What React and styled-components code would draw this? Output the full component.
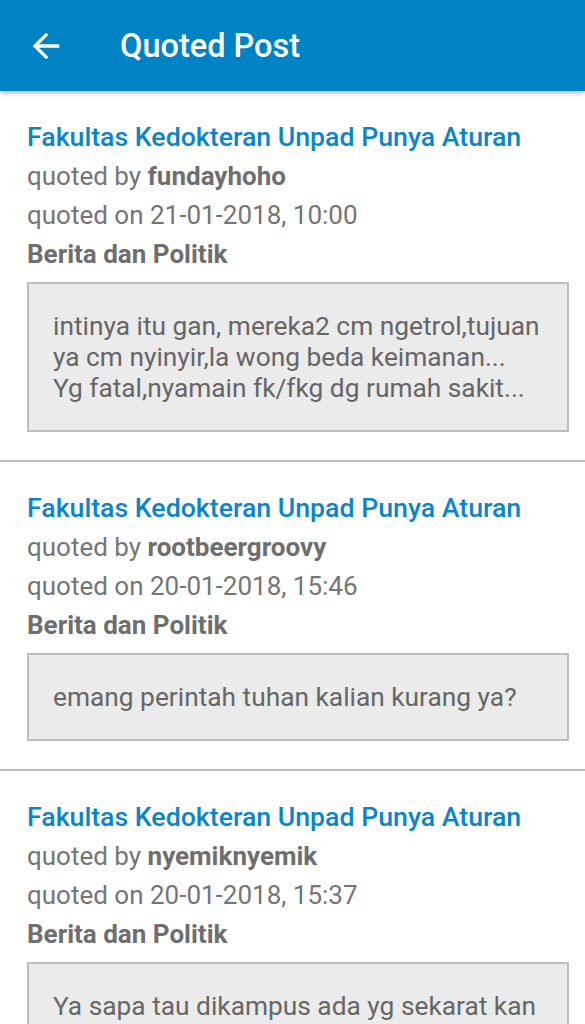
import React from "react";
import styled, { createGlobalStyle } from "styled-components";

const posts = [
  {
    user: "fundayhoho",
    date: "21-01-2018, 10:00",
    text: "intinya itu gan, mereka2 cm ngetrol,tujuan ya cm nyinyir,la wong beda keimanan...\nYg fatal,nyamain fk/fkg dg rumah sakit...",
  },
  {
    user: "rootbeergroovy",
    date: "20-01-2018, 15:46",
    text: "emang perintah tuhan kalian kurang ya?",
  },
  {
    user: "nyemiknyemik",
    date: "20-01-2018, 15:37",
    text: "Ya sapa tau dikampus ada yg sekarat kan bisa langsung ditolong gan...",
  },
];

function App() {
  return (
    <>
      <Global />
      <Page>
        <Header>
          <BackButton aria-label="back">
            <svg width="40" height="40" viewBox="0 0 24 24" fill="#fff">
              <path d="M20 11H7.83l5.59-5.59L12 4l-8 8 8 8 1.41-1.41L7.83 13H20v-2z" />
            </svg>
          </BackButton>
          <Title>Quoted Post</Title>
        </Header>
        <List>
          {posts.map((p, i) => (
            <Item key={i}>
              <ThreadTitle>Fakultas Kedokteran Unpad Punya Aturan</ThreadTitle>
              <Meta>
                quoted by <b>{p.user}</b>
              </Meta>
              <Meta>quoted on {p.date}</Meta>
              <Meta>
                <b>Berita dan Politik</b>
              </Meta>
              <Quote>{p.text}</Quote>
            </Item>
          ))}
        </List>
      </Page>
    </>
  );
}

const Global = createGlobalStyle`
  body {
    margin: 0;
    background: #ffffff;
    font-family: Roboto, "Noto Sans", sans-serif;
  }
`;

const Page = styled.div`
  width: 585px;
  height: 1024px;
  overflow: hidden;
`;

const Header = styled.header`
  height: 91px;
  background-color: #0083c5;
  display: flex;
  align-items: center;
  box-shadow: 0 2px 5px rgba(0, 0, 0, 0.3);
  position: relative;
  z-index: 1;
`;

const BackButton = styled.span`
  display: flex;
  margin-left: 26px;
  margin-top: 1px;
`;

const Title = styled.h1`
  margin: 0 0 0 54px;
  color: #ffffff;
  font-size: 32.5px;
  font-weight: 500;
`;

const List = styled.div``;

const Item = styled.div`
  padding: 27px 16px 28px 27px;
  border-bottom: 2px solid #bdbdbd;
`;

const ThreadTitle = styled.div`
  color: #0a85c8;
  font-size: 26.7px;
  font-weight: 500;
  line-height: 39px;
`;

const Meta = styled.div`
  color: #757575;
  font-size: 26px;
  line-height: 39px;

  b {
    color: #6e6e6e;
    font-weight: 700;
  }
`;

const Quote = styled.div`
  margin-top: 8px;
  background-color: #ebebeb;
  border: 2px solid #bdbdbd;
  padding: 26.5px 18px 26.5px 24px;
  color: #666666;
  font-size: 26.3px;
  line-height: 31px;
  white-space: pre-line;
`;

export default App;
